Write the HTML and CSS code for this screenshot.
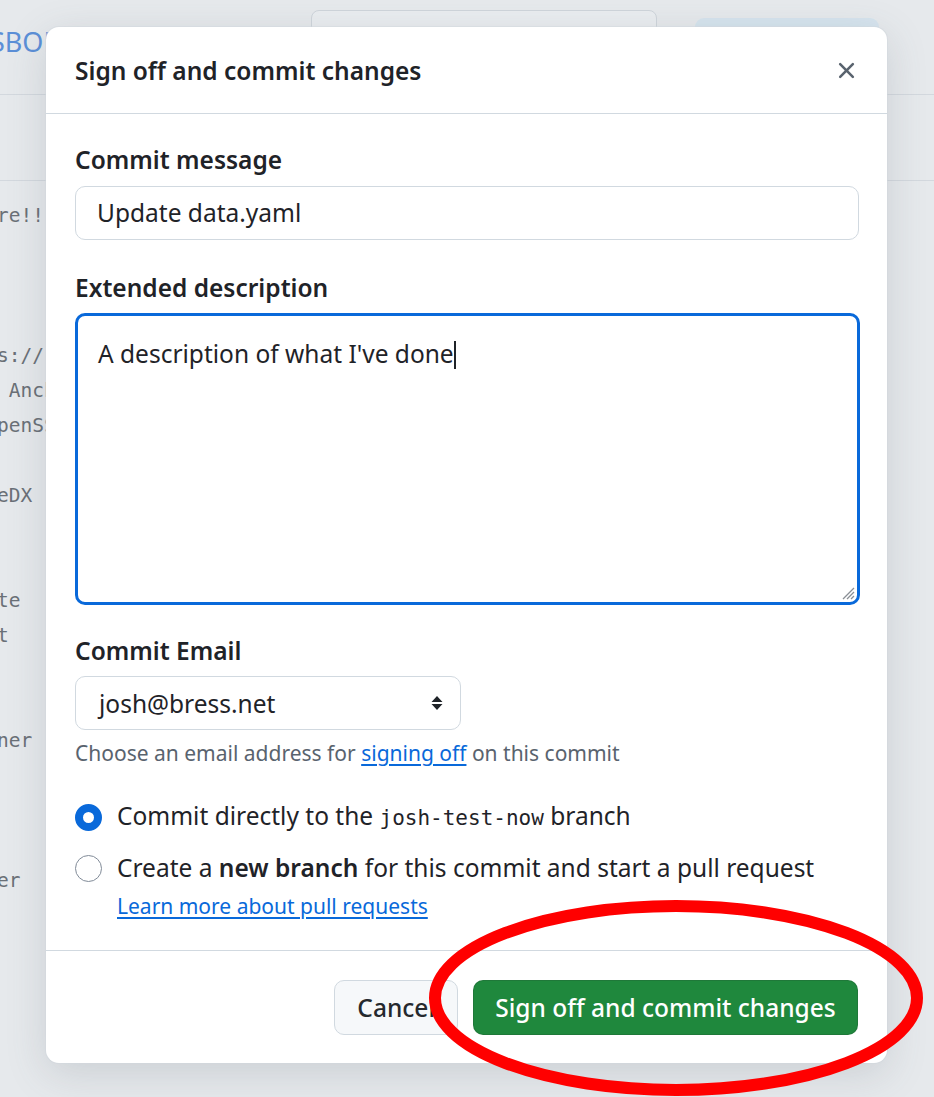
FILE: index.html
```html
<!DOCTYPE html>
<html lang="en">
<head>
<meta charset="utf-8">
<title>Sign off and commit changes</title>
<link rel="stylesheet" href="styles.css">
</head>
<body>
<div class="page">
  <div class="topbar">
    <div class="brand">SBOM</div>
    <div class="search"></div>
    <div></div>
    <div class="topbtn"></div>
  </div>
  <div class="subbar"></div>
  <pre class="code">re!!



s://
 Anch
penSS

eDX


te
t


ner



er</pre>
</div>

<div class="dialog" role="dialog" aria-label="Sign off and commit changes">
  <div class="dlg-header">
    <h1 class="dlg-title">Sign off and commit changes</h1>
    <button class="close" aria-label="Close">
      <svg width="27" height="27" viewBox="0 0 16 16"><path d="M3.72 3.72a.75.75 0 0 1 1.06 0L8 6.94l3.22-3.22a.75.75 0 1 1 1.06 1.06L9.06 8l3.22 3.22a.75.75 0 1 1-1.06 1.06L8 9.06l-3.22 3.22a.75.75 0 0 1-1.06-1.06L6.94 8 3.72 4.78a.75.75 0 0 1 0-1.06Z" fill="#59636e"/></svg>
    </button>
  </div>
  <div class="dlg-body">
    <div class="label first">Commit message</div>
    <div class="input">Update data.yaml</div>
    <div class="label">Extended description</div>
    <div class="textarea"><span>A description of what I've done</span><span class="caret"></span>
      <svg class="grip" width="16" height="16" viewBox="0 0 16 16"><path d="M15 4 4 15M15 8 8 15M15 12 12 15" stroke="#8a8f95" stroke-width="1.3"/></svg>
    </div>
    <div class="label third">Commit Email</div>
    <div class="select"><span>josh@bress.net</span>
      <svg width="12" height="18" viewBox="0 0 12 18"><path d="M6 2 11.5 8H.5Z M6 16 .5 10h11Z" fill="#1f2328"/></svg>
    </div>
    <div class="help">Choose an email address for <a href="#">signing off</a> on this commit</div>
    <div class="radio-row r1"><span class="radio on"></span><span>Commit directly to the <code>josh-test-now</code> branch</span></div>
    <div class="radio-row r2"><span class="radio"></span><span>Create a <b>new branch</b> for this commit and start a pull request</span></div>
    <a class="learn" href="#">Learn more about pull requests</a>
  </div>
  <div class="dlg-footer">
    <button class="btn">Cancel</button>
    <button class="btn primary">Sign off and commit changes</button>
  </div>
</div>

<svg class="circle" width="934" height="1097" viewBox="0 0 934 1097">
  <ellipse cx="676" cy="998" rx="241" ry="92" fill="none" stroke="#ff0000" stroke-width="12"/>
</svg>
</body>
</html>
```
FILE: styles.css
```css
html, body {
  margin: 0;
  padding: 0;
}
body {
  width: 934px;
  height: 1097px;
  overflow: hidden;
  background: #e6e9ec;
  position: relative;
  font-family: "Noto Sans", "DejaVu Sans", sans-serif;
  color: #1f2328;
}
.page {
  width: 934px;
}
.topbar {
  height: 94px;
  border-bottom: 1px solid #d3d8de;
  display: grid;
  grid-template-columns: 311px 346px 38px 184px;
  align-items: start;
}
.brand {
  margin-left: -10px;
  margin-top: 20px;
  font-size: 27px;
  line-height: 44px;
  color: #5b8fd7;
  white-space: nowrap;
}
.search {
  margin-top: 10px;
  height: 60px;
  border: 1.5px solid #cfd5db;
  border-radius: 8px;
  background: #eaedf0;
}
.topbtn {
  margin-top: 18px;
  height: 50px;
  border-radius: 9px;
  background: #d6e4ee;
}
.subbar {
  height: 85px;
  border-bottom: 1px solid #d3d8de;
}
.code {
  margin: 0 0 0 -3px;
  padding-top: 17px;
  font-family: "DejaVu Sans Mono", monospace;
  font-size: 19.5px;
  line-height: 35px;
  color: #6a7077;
}

.dialog {
  position: absolute;
  left: 46px;
  top: 27px;
  width: 841px;
  height: 1036px;
  background: #ffffff;
  border-radius: 13px;
  box-shadow: 0 0 0 1px rgba(210, 215, 222, 0.5), 0 10px 40px rgba(80, 90, 100, 0.18);
  display: flex;
  flex-direction: column;
}
.dlg-header {
  height: 86px;
  border-bottom: 1.5px solid #d1d9e0;
  display: flex;
  align-items: center;
  justify-content: space-between;
  padding: 0 29px;
  flex-shrink: 0;
}
.dlg-title {
  margin: 0;
  font-size: 24.5px;
  font-weight: 600;
  color: #1f2328;
}
.close {
  border: 0;
  background: none;
  padding: 0;
  margin-right: -3px;
  width: 30px;
  height: 30px;
  display: flex;
  align-items: center;
  justify-content: center;
}
.dlg-body {
  padding: 0 28px 0 29px;
  flex: 1;
  display: flex;
  flex-direction: column;
  align-items: flex-start;
}
.label {
  font-size: 24.5px;
  font-weight: 600;
  line-height: 34px;
  margin-top: 31px;
  margin-bottom: 8px;
}
.label.first {
  margin-top: 29px;
  margin-bottom: 9px;
}
.label.third {
  margin-top: 29px;
}
.input {
  box-sizing: border-box;
  width: 784px;
  height: 54px;
  border: 1.5px solid #d1d9e0;
  border-radius: 10px;
  padding-left: 21px;
  font-size: 24.5px;
  line-height: 51px;
}
.textarea {
  box-sizing: border-box;
  width: 785px;
  height: 292px;
  border: 3px solid #0969da;
  border-radius: 10px;
  padding: 21px 20px;
  font-size: 24.5px;
  line-height: 34px;
  position: relative;
}
.caret {
  display: inline-block;
  width: 2px;
  height: 28px;
  background: #1f2328;
  vertical-align: -6px;
}
.grip {
  position: absolute;
  right: 2px;
  bottom: 2px;
}
.select {
  box-sizing: border-box;
  width: 386px;
  height: 54px;
  border: 1.5px solid #d1d9e0;
  border-radius: 10px;
  padding: 0 17px 0 23px;
  font-size: 24.5px;
  display: flex;
  align-items: center;
  justify-content: space-between;
}
.help {
  margin-top: 9px;
  font-size: 21px;
  line-height: 28px;
  color: #59636e;
}
.help a, .learn {
  color: #0969da;
  text-decoration: underline;
  text-underline-offset: 3px;
}
.radio-row {
  display: flex;
  align-items: center;
  gap: 15px;
  font-size: 24.5px;
  line-height: 34px;
}
.r1 { margin-top: 32px; }
.r2 { margin-top: 16px; }
.radio {
  box-sizing: border-box;
  width: 27px;
  height: 27px;
  border-radius: 50%;
  border: 1.5px solid #818b98;
  background: #fff;
  flex-shrink: 0;
}
.radio.on {
  border: 8px solid #0969da;
}
code {
  font-family: "DejaVu Sans Mono", monospace;
  font-size: 21px;
}
b { font-weight: 600; }
.learn {
  margin-left: 42px;
  margin-top: 7px;
  font-size: 21px;
  line-height: 28px;
}
.dlg-footer {
  border-top: 1.5px solid #d1d9e0;
  padding: 29px 29px 28px;
  display: flex;
  justify-content: flex-end;
  gap: 15px;
  flex-shrink: 0;
}
.btn {
  height: 55px;
  padding: 0 22px;
  border: 1.5px solid #d1d9e0;
  border-radius: 10px;
  background: #f6f8fa;
  color: #25292e;
  font-family: "Noto Sans", "DejaVu Sans", sans-serif;
  font-size: 24.5px;
  font-weight: 500;
  white-space: nowrap;
}
.btn.primary {
  width: 385px;
  padding: 0;
  background: #1f883d;
  border-color: rgba(31, 35, 40, 0.15);
  color: #ffffff;
}
.circle {
  position: absolute;
  left: 0;
  top: 0;
  pointer-events: none;
}
```
